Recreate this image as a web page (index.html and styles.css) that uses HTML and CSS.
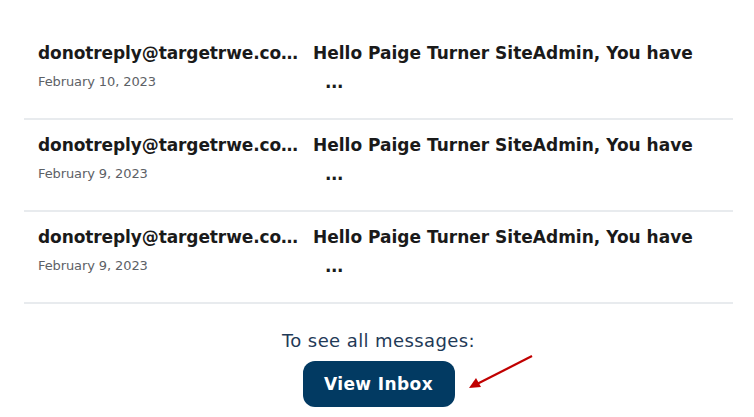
FILE: index.html
```html
<!doctype html>
<html>

<head>
  <meta charset="UTF-8">
  <title>Messages</title>
  <link rel="stylesheet" href="styles.css">
</head>

<body>
  <div class="messages">
    <div class="message">
      <div class="sender">
        <div class="from">donotreply@targetrwe.co…</div>
        <div class="date">February 10, 2023</div>
      </div>
      <div class="subject">Hello Paige Turner SiteAdmin, You have <span class="more">...</span></div>
    </div>
    <div class="message">
      <div class="sender">
        <div class="from">donotreply@targetrwe.co…</div>
        <div class="date">February 9, 2023</div>
      </div>
      <div class="subject">Hello Paige Turner SiteAdmin, You have <span class="more">...</span></div>
    </div>
    <div class="message">
      <div class="sender">
        <div class="from">donotreply@targetrwe.co…</div>
        <div class="date">February 9, 2023</div>
      </div>
      <div class="subject">Hello Paige Turner SiteAdmin, You have <span class="more">...</span></div>
    </div>
  </div>

  <div class="footer">
    <p>To see all messages:</p>
    <div class="action">
      <a class="button" href="#">View Inbox</a>
      <svg class="arrow" width="70" height="40" viewBox="0 0 70 40">
        <line x1="67" y1="2" x2="12" y2="30" stroke="#c00000" stroke-width="2.2" />
        <polygon points="4,34 11,24 16,33" fill="#c00000" />
      </svg>
    </div>
  </div>
</body>

</html>
```

FILE: styles.css
```css
body {
  margin: 0;
  padding: 30px 21px 0 24px;
  font-family: "DejaVu Sans", Verdana, sans-serif;
  background: #fff;
  color: #1a1a1a;
}

.message {
  display: flex;
  height: 90px;
  padding: 12px 0 0 14px;
  box-sizing: border-box;
  border-bottom: 2px solid #e8ebee;
}

.message + .message {
  height: 92px;
  padding-top: 14px;
}

.sender {
  width: 275px;
  flex: none;
}

.from {
  font-size: 17px;
  font-weight: bold;
  line-height: 22px;
  white-space: nowrap;
  letter-spacing: -0.1px;
}

.date {
  margin-top: 10px;
  font-size: 13px;
  color: #5d6166;
  letter-spacing: -0.1px;
}

.subject {
  width: 390px;
  font-size: 17px;
  font-weight: bold;
  line-height: 34px;
  margin-top: -6px;
}

.more {
  display: block;
  padding-left: 12px;
  line-height: 24px;
  letter-spacing: -0.5px;
}

.footer {
  text-align: center;
  padding-top: 25px;
}

.footer p {
  margin: 0;
  font-size: 18px;
  color: #1f3a57;
  line-height: 24px;
  letter-spacing: 0.4px;
}

.action {
  position: relative;
  display: inline-block;
  margin-top: 8px;
}

.button {
  display: inline-block;
  width: 152px;
  height: 46px;
  line-height: 46px;
  box-sizing: border-box;
  background: #023a62;
  border-radius: 12px;
  color: #fff;
  font-size: 17px;
  font-weight: bold;
  letter-spacing: 0.4px;
  text-decoration: none;
}

.arrow {
  position: absolute;
  left: 162px;
  top: -7px;
}
```
